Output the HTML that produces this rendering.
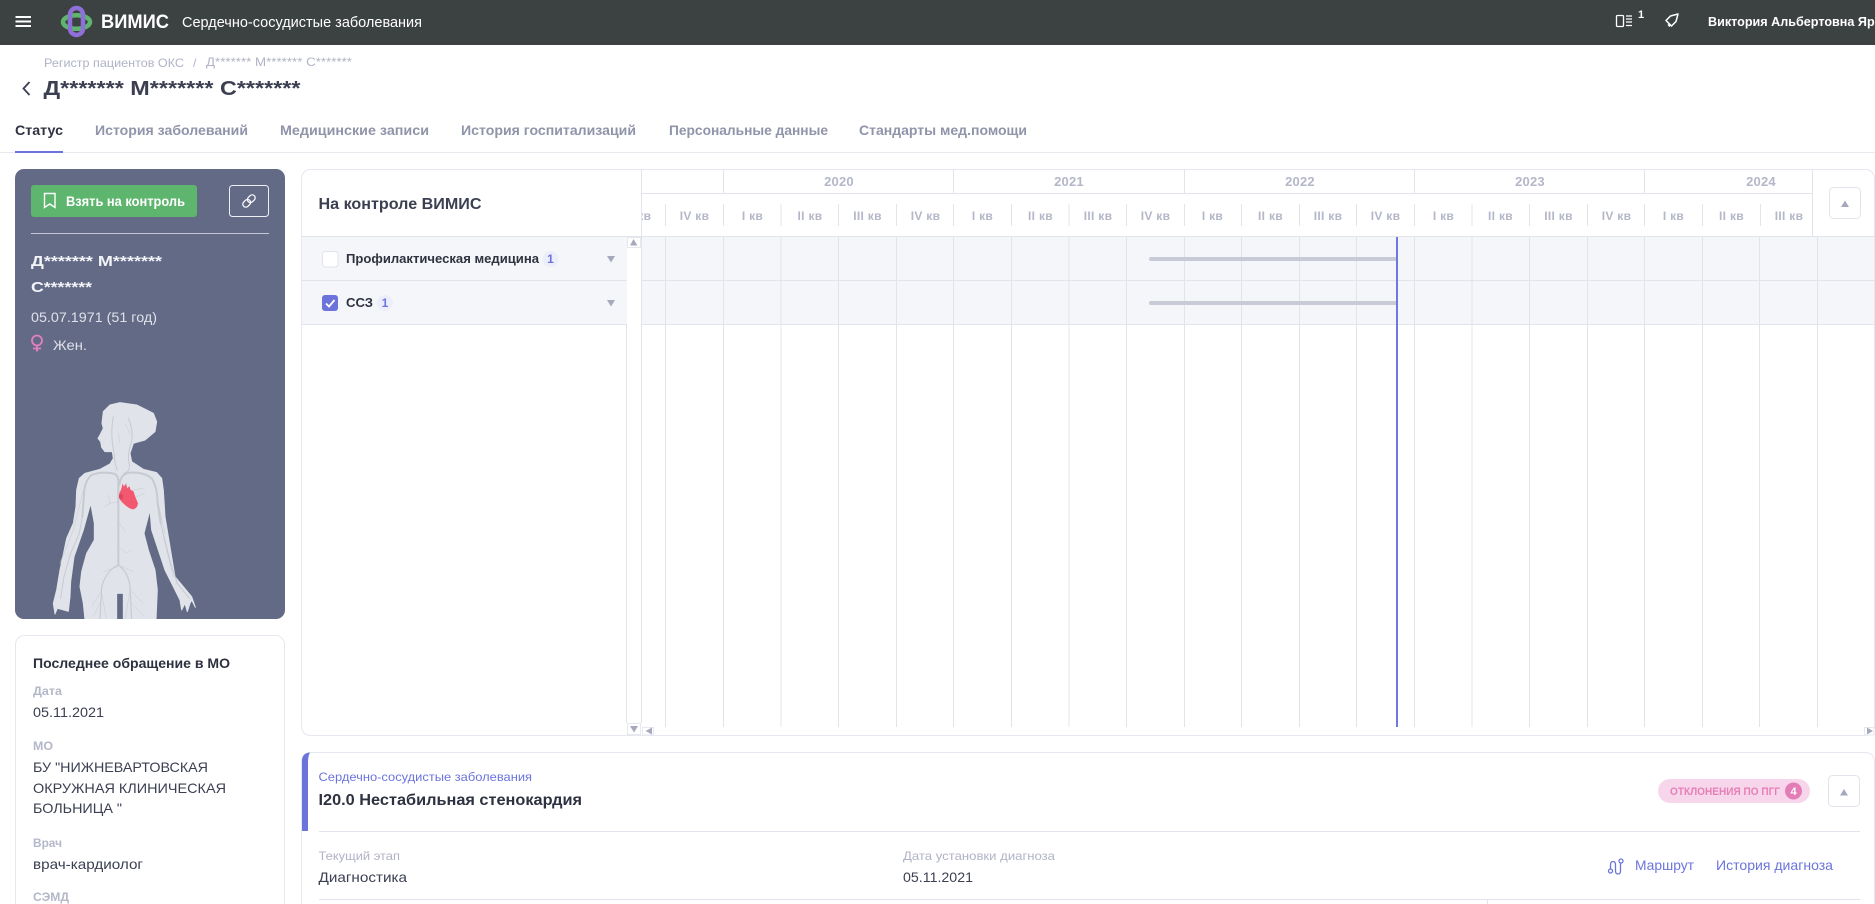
<!DOCTYPE html>
<html lang="ru">
<head>
<meta charset="utf-8">
<title>ВИМИС — Сердечно-сосудистые заболевания</title>
<style>
html,body{margin:0;padding:0;width:1875px;height:904px;overflow:hidden;background:#fff}
svg{display:block;font-family:"Liberation Sans","Noto Sans CJK SC",sans-serif}
.b{font-weight:700}
.q{font-size:12px;font-weight:700;fill:#b4b7c8;text-anchor:middle;letter-spacing:.3px}
.y{font-size:13px;font-weight:700;fill:#b4b7c8;text-anchor:middle;letter-spacing:.2px}
.tab{font-size:14px;font-weight:700;fill:#9094a9}
.lab{font-size:12px;font-weight:700;fill:#b4b7c8}
.val{font-size:14px;fill:#3b3f51}
.sub{font-size:12px;fill:#b0b3c6}
.g{stroke:#e2e4ec;stroke-width:1;fill:none}
.tri{fill:#a6a9bd}
</style>
</head>
<body>
<svg width="1875" height="904" viewBox="0 0 1875 904" xmlns="http://www.w3.org/2000/svg">
<defs>
<clipPath id="panel"><rect x="15" y="169" width="270" height="450" rx="9"/></clipPath>
<clipPath id="hdr"><rect x="642" y="194" width="1170" height="42"/></clipPath>
<clipPath id="frame"><rect x="0" y="0" width="1875" height="904"/></clipPath>
</defs>
<g clip-path="url(#frame)">

<!-- top bar -->
<rect x="0" y="0" width="1875" height="45" fill="#3c4142"/>
<g fill="#fff">
<rect x="15.5" y="16" width="15.5" height="2"/><rect x="15.5" y="20.5" width="15.5" height="2"/><rect x="15.5" y="25" width="15.5" height="2"/>
</g>
<ellipse cx="76.5" cy="22" rx="13.5" ry="6.8" fill="none" stroke="#5eb56e" stroke-width="4.5"/>
<rect x="70" y="8" width="13" height="27" rx="6.5" fill="none" stroke="#8f6fd8" stroke-width="4.5"/>
<text x="101" y="28" font-size="19" class="b" fill="#fff" textLength="68" lengthAdjust="spacingAndGlyphs">ВИМИС</text>
<text x="182" y="27" font-size="15" fill="#fff" textLength="240" lengthAdjust="spacingAndGlyphs">Сердечно-сосудистые заболевания</text>
<rect x="1616.5" y="15.5" width="7" height="11" fill="none" stroke="#fff" stroke-width="1.3" rx="1"/>
<path d="M1626 16h6M1626 19h6M1626 22h6M1626 25.5h6" stroke="#fff" stroke-width="1.3" fill="none"/>
<text x="1638" y="18" font-size="11" class="b" fill="#fff">1</text>
<path d="M1666 20.5l4.500-4.500 7.500-2-2 7.500-4.500 4.500zM1668 24.500l2 2" fill="none" stroke="#fff" stroke-width="1.5" stroke-linejoin="round"/>
<text x="1708" y="26" font-size="13" class="b" fill="#fff" textLength="196" lengthAdjust="spacingAndGlyphs">Виктория Альбертовна Ярцева</text>

<!-- breadcrumbs and title -->
<text x="44" y="67" class="sub" textLength="140" lengthAdjust="spacingAndGlyphs">Регистр пациентов ОКС</text>
<text x="193" y="67" class="sub">/</text>
<text x="206" y="66" class="sub" textLength="146" lengthAdjust="spacingAndGlyphs">Д******* М******* С*******</text>
<path d="M29.5 82l-6 6.500 6 6.500" fill="none" stroke="#3b3f51" stroke-width="1.800"/>
<text x="43.5" y="95" font-size="20" class="b" fill="#3b3f51" textLength="257" lengthAdjust="spacingAndGlyphs">Д******* М******* С*******</text>

<!-- tabs -->
<text x="15" y="135" font-size="14" class="b" fill="#2e3140" textLength="48" lengthAdjust="spacingAndGlyphs">Статус</text>
<text x="95" y="135" class="tab" textLength="153" lengthAdjust="spacingAndGlyphs">История заболеваний</text>
<text x="280" y="135" class="tab" textLength="149" lengthAdjust="spacingAndGlyphs">Медицинские записи</text>
<text x="461" y="135" class="tab" textLength="175" lengthAdjust="spacingAndGlyphs">История госпитализаций</text>
<text x="669" y="135" class="tab" textLength="159" lengthAdjust="spacingAndGlyphs">Персональные данные</text>
<text x="859" y="135" class="tab" textLength="168" lengthAdjust="spacingAndGlyphs">Стандарты мед.помощи</text>
<rect x="0" y="152" width="1875" height="1" fill="#e9eaf0"/>
<rect x="15" y="151" width="48" height="2" fill="#6c74dc"/>

<!-- patient panel -->
<rect x="15" y="169" width="270" height="450" rx="9" fill="#636a86"/>
<rect x="31" y="185" width="166" height="32" rx="3" fill="#5eb56e"/>
<path d="M44.5 193.500h10.500v14l-5.250-3.500-5.250 3.500z" fill="none" stroke="#fff" stroke-width="1.400"/>
<text x="66" y="206" font-size="14" class="b" fill="#fff" textLength="119" lengthAdjust="spacingAndGlyphs">Взять на контроль</text>
<rect x="229.5" y="185.500" width="39" height="31" rx="3" fill="none" stroke="#eef0f5" stroke-width="1"/>
<g fill="none" stroke="#fff" stroke-width="1.200" transform="rotate(-45 249 201)">
<rect x="241.5" y="198" width="8.500" height="6" rx="3"/><rect x="248" y="198" width="8.500" height="6" rx="3"/>
</g>
<rect x="31" y="233" width="238" height="1" fill="#c3c6d3"/>
<text x="31" y="266" font-size="15" class="b" fill="#f3f4f8" textLength="131" lengthAdjust="spacingAndGlyphs">Д******* М*******</text>
<text x="31" y="292" font-size="15" class="b" fill="#f3f4f8" textLength="61" lengthAdjust="spacingAndGlyphs">С*******</text>
<text x="31" y="322" font-size="14" fill="#dfe1ea" textLength="126" lengthAdjust="spacingAndGlyphs">05.07.1971 (51 год)</text>
<circle cx="37" cy="340.500" r="5" fill="none" stroke="#e37fc0" stroke-width="1.800"/>
<path d="M37 345.500v6M33 348.500h8" stroke="#e37fc0" stroke-width="1.800" fill="none"/>
<text x="53" y="350" font-size="14" fill="#dfe1ea" textLength="34" lengthAdjust="spacingAndGlyphs">Жен.</text>

<g clip-path="url(#panel)">
<g transform="translate(50 390) scale(.3333)">
<path fill="#e0e4ea" stroke="#e0e4ea" stroke-width="3" stroke-linejoin="round" d="M160 65L156 100L160 115L150 135L144 145L152 155L155 172L165 185L187 185L190 205L180 222L150 238L105 250L88 265L80 300L78 350L70 400L50 445L30 540L20 600L10 640L15 672L22 655L55 664L60 620L62 575L72 500L100 420L122 340L133 400L133 450L110 490L95 545L90 590L100 640L105 690L200 690L200 610L220 610L220 690L318 690L322 600L315 540L295 480L282 430L300 360L305 420L345 540L370 590L390 630L395 660L405 640L412 665L420 640L425 630L436 652L425 620L400 590L375 560L345 380L340 300L335 265L320 248L280 238L245 215L240 190L250 160L285 150L315 125L320 95L310 70L290 60L260 45L210 38L180 45Z"/>
<g fill="none" stroke="#c7cbd1" stroke-linecap="round" stroke-linejoin="round">
<path stroke-width="6" d="M205 525V270Q203 250 180 249Q150 245 125 255Q108 268 103 300L97 380"/>
<path stroke-width="3" d="M97 380L88 430L62 490L42 560L32 625"/>
<path stroke-width="6" d="M208 285Q212 250 240 248Q280 245 305 265Q322 290 323 340L332 400"/>
<path stroke-width="3" d="M332 400L362 520L382 580L418 625"/>
<path stroke-width="3.500" d="M205 525Q170 540 155 590L150 690M205 525Q235 545 240 590L245 690"/>
<path stroke-width="3" d="M190 80Q180 130 192 190Q195 225 202 242M235 85Q255 130 240 170Q232 200 238 225Q240 245 222 250"/>
<path stroke-width="1.500" d="M205 335L180 340L165 350M180 340L175 315M205 395L225 425M205 470L230 490L245 480M205 525L250 545M205 530L160 545M155 600L125 650M150 640L130 680M155 610L170 690M240 600L280 640M245 640L285 680M240 600L225 690M100 300L70 420L30 520M325 340L345 430M340 440L370 560M250 300L280 295M258 320L285 310M205 130L210 160M240 130L225 100"/>
</g>
<path fill="#f2586f" d="M213 300L218 280L222 290L228 280L232 295L238 288L242 300L250 303L255 318L264 340Q262 355 250 358Q240 358 225 345Q207 330 207 318Q207 308 213 300Z"/>
<ellipse cx="213" cy="320" rx="6" ry="9" fill="#dd4560"/>
</g>
</g>

<!-- last visit card -->
<path d="M15.5 904V644.500a9 9 0 0 1 9-9H275.500a9 9 0 0 1 9 9V904" fill="#fff" stroke="#e6e7ef"/>
<text x="33" y="668" font-size="14" class="b" fill="#2e3140" textLength="197" lengthAdjust="spacingAndGlyphs">Последнее обращение в МО</text>
<text x="33" y="695" class="lab" textLength="29" lengthAdjust="spacingAndGlyphs">Дата</text>
<text x="33" y="717" class="val" textLength="71" lengthAdjust="spacingAndGlyphs">05.11.2021</text>
<text x="33" y="750" class="lab" textLength="20" lengthAdjust="spacingAndGlyphs">МО</text>
<text x="33" y="772" class="val" textLength="175" lengthAdjust="spacingAndGlyphs">БУ "НИЖНЕВАРТОВСКАЯ</text>
<text x="33" y="793" class="val" textLength="193" lengthAdjust="spacingAndGlyphs">ОКРУЖНАЯ КЛИНИЧЕСКАЯ</text>
<text x="33" y="813" class="val" textLength="89" lengthAdjust="spacingAndGlyphs">БОЛЬНИЦА "</text>
<text x="33" y="847" class="lab" textLength="29" lengthAdjust="spacingAndGlyphs">Врач</text>
<text x="33" y="869" class="val" textLength="110" lengthAdjust="spacingAndGlyphs">врач-кардиолог</text>
<text x="33" y="901" class="lab" textLength="36" lengthAdjust="spacingAndGlyphs">СЭМД</text>

<!-- timeline panel -->
<rect x="301.5" y="169.500" width="1573" height="566" rx="9" fill="#fff" stroke="#e6e7ef"/>
<rect x="302" y="237" width="325" height="87" fill="#f5f6f9"/>
<rect x="642" y="237" width="1232" height="87" fill="#f5f6f9"/>
<path class="g" d="M302 236.500H1874M302 280.500H627M642 280.500H1874M302 324.500H627M642 324.500H1874M642 193.500H1812"/>
<path class="g" d="M641.5 170V236M626.500 324V723M641.500 237V723M1812.500 170V236"/>
<path class="g" d="M665.5 237V727M723.500 237V727M781 237V727M838.500 237V727M896.500 237V727M953.500 237V727M1011.500 237V727M1069 237V727M1126.500 237V727M1184.500 237V727M1241.500 237V727M1299.500 237V727M1356.500 237V727M1414.500 237V727M1472 237V727M1529.500 237V727M1587.500 237V727M1644.500 237V727M1702.500 237V727M1759.500 237V727M1817.500 237V727"/>
<path class="g" d="M723.5 170V193M953.500 170V193M1184.500 170V193M1414.500 170V193M1644.500 170V193"/>
<path class="g" d="M665.5 204V226M723.500 204V226M781 204V226M838.500 204V226M896.500 204V226M953.500 204V226M1011.500 204V226M1069 204V226M1126.500 204V226M1184.500 204V226M1241.500 204V226M1299.500 204V226M1356.500 204V226M1414.500 204V226M1472 204V226M1529.500 204V226M1587.500 204V226M1644.500 204V226M1702.500 204V226M1760.500 204V226"/>

<text x="839" y="186" class="y">2020</text>
<text x="1069" y="186" class="y">2021</text>
<text x="1300" y="186" class="y">2022</text>
<text x="1530" y="186" class="y">2023</text>
<text x="1761" y="186" class="y">2024</text>

<g clip-path="url(#hdr)">
<text x="637" y="220" class="q">III кв</text>
<text x="694.5" y="220" class="q">IV кв</text>
<text x="752.5" y="220" class="q">I кв</text>
<text x="810" y="220" class="q">II кв</text>
<text x="867.5" y="220" class="q">III кв</text>
<text x="925.5" y="220" class="q">IV кв</text>
<text x="982.5" y="220" class="q">I кв</text>
<text x="1040.5" y="220" class="q">II кв</text>
<text x="1098" y="220" class="q">III кв</text>
<text x="1155.5" y="220" class="q">IV кв</text>
<text x="1212.5" y="220" class="q">I кв</text>
<text x="1270.5" y="220" class="q">II кв</text>
<text x="1328" y="220" class="q">III кв</text>
<text x="1385.5" y="220" class="q">IV кв</text>
<text x="1443.5" y="220" class="q">I кв</text>
<text x="1500.5" y="220" class="q">II кв</text>
<text x="1558.5" y="220" class="q">III кв</text>
<text x="1616.5" y="220" class="q">IV кв</text>
<text x="1673.5" y="220" class="q">I кв</text>
<text x="1731.5" y="220" class="q">II кв</text>
<text x="1789" y="220" class="q">III кв</text>
</g>

<text x="318.5" y="209" font-size="16" class="b" fill="#3b3f51" textLength="163" lengthAdjust="spacingAndGlyphs">На контроле ВИМИС</text>

<rect x="322.5" y="251.500" width="15.500" height="15.500" rx="3" fill="#fff" stroke="#e1e3ec"/>
<text x="346" y="263" font-size="13" class="b" fill="#2e3140" textLength="193" lengthAdjust="spacingAndGlyphs">Профилактическая медицина</text>
<circle cx="550.5" cy="259" r="8" fill="#eceefb"/>
<text x="550.5" y="263" font-size="12" class="b" fill="#6c74dc" text-anchor="middle">1</text>
<path class="tri" d="M607 256h8l-4 6.500z"/>

<rect x="322" y="295" width="16" height="16" rx="3" fill="#6c74dc"/>
<path d="M326 303.500l3 3 5.500-6.500" fill="none" stroke="#fff" stroke-width="1.800"/>
<text x="346" y="307" font-size="13" class="b" fill="#2e3140" textLength="27" lengthAdjust="spacingAndGlyphs">ССЗ</text>
<circle cx="385" cy="303" r="8" fill="#eceefb"/>
<text x="385" y="307" font-size="12" class="b" fill="#6c74dc" text-anchor="middle">1</text>
<path class="tri" d="M607 300h8l-4 6.500z"/>

<!-- scroll arrows -->
<rect x="627.5" y="237.500" width="13" height="10" fill="#fff" stroke="#e6e7ef"/>
<path class="tri" d="M630 245.500l3.500-6.500 4 6.500z"/>
<rect x="627.5" y="723.500" width="13" height="11" fill="#fff" stroke="#e6e7ef"/>
<path class="tri" d="M630 726h8l-4 6.500z"/>
<rect x="642.5" y="727.500" width="11" height="7.500" fill="#fff" stroke="#e6e7ef"/>
<path class="tri" d="M652 727.500v7l-6.500-3.500z"/>
<rect x="1864.5" y="727.500" width="9.500" height="7.500" fill="#fff" stroke="#e6e7ef"/>
<path class="tri" d="M1867 727.500v7l6-3.500z"/>

<!-- bars -->
<rect x="1149" y="257" width="248" height="4" rx="2" fill="#c8cad6"/>
<rect x="1149" y="301" width="248" height="4" rx="2" fill="#c8cad6"/>
<rect x="1396" y="237" width="2" height="490" fill="#6f78e0"/>

<rect x="1829.5" y="187.500" width="31" height="31" rx="4" fill="#fff" stroke="#e2e4ec"/>
<path class="tri" d="M1841 207l4-6.500 4 6.500z"/>

<!-- diagnosis card -->
<path d="M301.5 904V761.500a9 9 0 0 1 9-9H1865.500a9 9 0 0 1 9 9V904" fill="#fff" stroke="#e6e7ef"/>
<path d="M302 831V761Q302 753 310 752.500Q308 756 308 762V831Z" fill="#6c74dc"/>
<text x="318.5" y="781" font-size="12" fill="#6c74dc" textLength="213.500" lengthAdjust="spacingAndGlyphs">Сердечно-сосудистые заболевания</text>
<text x="318.5" y="805" font-size="16" class="b" fill="#2e3140" textLength="263.500" lengthAdjust="spacingAndGlyphs">I20.0 Нестабильная стенокардия</text>

<rect x="1658" y="779" width="152" height="24" rx="12" fill="#f7d6ec"/>
<text x="1670" y="795" font-size="11" class="b" fill="#e77fb7" textLength="110" lengthAdjust="spacingAndGlyphs">ОТКЛОНЕНИЯ ПО ПГГ</text>
<circle cx="1793.5" cy="791" r="8.500" fill="#e47db6"/>
<text x="1793.5" y="795" font-size="11" class="b" fill="#fff" text-anchor="middle">4</text>
<rect x="1828.5" y="775.500" width="31" height="31" rx="4" fill="#fff" stroke="#e2e4ec"/>
<path class="tri" d="M1840 795.500l4-6.500 4 6.500z"/>

<path class="g" d="M319 831.500H1860M319 899.500H1860M1487.500 899.500V904"/>
<text x="318.5" y="860" class="sub" textLength="81.500" lengthAdjust="spacingAndGlyphs">Текущий этап</text>
<text x="318.5" y="882" class="val" textLength="88.500" lengthAdjust="spacingAndGlyphs">Диагностика</text>
<text x="903" y="860" class="sub" textLength="152" lengthAdjust="spacingAndGlyphs">Дата установки диагноза</text>
<text x="903" y="882" class="val" textLength="70" lengthAdjust="spacingAndGlyphs">05.11.2021</text>

<g fill="none" stroke="#6c74dc" stroke-width="1.300">
<circle cx="1610.5" cy="871" r="2"/><circle cx="1621" cy="861" r="2"/>
<path d="M1610.5 869v-4q0-3.500 2.500-3.500t2.500 3.500v6q0 3 2.500 3t2.500-3v-7.500"/>
</g>
<text x="1635" y="870" font-size="14" fill="#6c74dc" textLength="59" lengthAdjust="spacingAndGlyphs">Маршрут</text>
<text x="1716" y="870" font-size="14" fill="#6c74dc" textLength="117" lengthAdjust="spacingAndGlyphs">История диагноза</text>
</g>
</svg>
</body>
</html>
